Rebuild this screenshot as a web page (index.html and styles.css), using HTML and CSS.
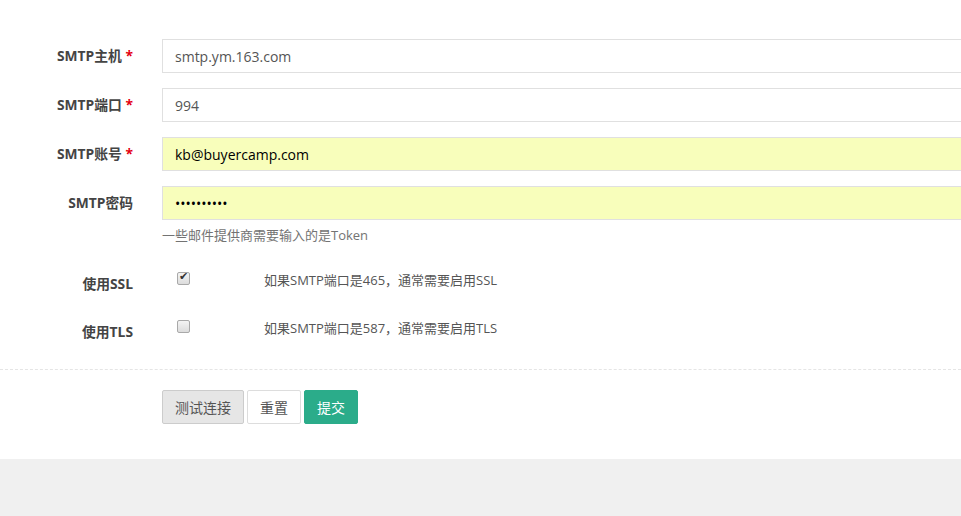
FILE: index.html
```html
<!DOCTYPE html>
<html lang="zh-CN">
<head>
  <meta charset="UTF-8">
  <title>邮件设置</title>
  <link rel="stylesheet" href="styles.css">
</head>
<body>
  <div class="panel">
    <form class="form">
      <div class="row">
        <label class="label">SMTP主机 <span class="req">*</span></label>
        <div class="field"><input class="input" type="text" value="smtp.ym.163.com"></div>
      </div>
      <div class="row">
        <label class="label">SMTP端口 <span class="req">*</span></label>
        <div class="field"><input class="input" type="text" value="994"></div>
      </div>
      <div class="row">
        <label class="label">SMTP账号 <span class="req">*</span></label>
        <div class="field"><input class="input filled" type="text" value="kb@buyercamp.com"></div>
      </div>
      <div class="row row-help">
        <label class="label">SMTP密码</label>
        <div class="field">
          <input class="input filled" type="password" value="1234567890">
          <p class="help">一些邮件提供商需要输入的是Token</p>
        </div>
      </div>
      <div class="row row-check">
        <label class="label">使用SSL</label>
        <div class="field check-field">
          <div class="check-box"><input class="check" type="checkbox" checked></div>
          <span class="check-note">如果SMTP端口是465，通常需要启用SSL</span>
        </div>
      </div>
      <div class="row row-check">
        <label class="label">使用TLS</label>
        <div class="field check-field">
          <div class="check-box"><input class="check" type="checkbox"></div>
          <span class="check-note">如果SMTP端口是587，通常需要启用TLS</span>
        </div>
      </div>

      <div class="actions">
        <button type="button" class="btn btn-test">测试连接</button>
        <button type="reset" class="btn btn-reset">重置</button>
        <button type="button" class="btn btn-submit">提交</button>
      </div>
    </form>
  </div>
  <div class="page-bottom"></div>
</body>
</html>
```

FILE: styles.css
```css
html, body {
  margin: 0;
  padding: 0;
}
body {
  font-family: "Open Sans", "Noto Sans CJK SC", sans-serif;
  font-size: 13px;
  color: #555555;
  background-color: #f0f0f0;
  overflow: hidden;
}
.panel {
  background-color: #ffffff;
  padding-top: 39px;
  padding-bottom: 35px;
}
.row {
  display: flex;
  margin-bottom: 15px;
}
.label {
  width: 133px;
  padding-right: 14px;
  padding-top: 7px;
  text-align: right;
  font-size: 13.8px;
  font-weight: bold;
  color: #444444;
  line-height: 20px;
  flex-shrink: 0;
}
.label .req {
  color: #e4000f;
}
.field {
  padding-left: 15px;
  width: 820px;
  flex-shrink: 0;
}
.input {
  display: block;
  box-sizing: border-box;
  width: 100%;
  height: 34px;
  padding: 6px 12px;
  border: 1px solid #e0e0e0;
  background-color: #ffffff;
  font-family: "Open Sans", "Noto Sans CJK SC", sans-serif;
  font-size: 14px;
  color: #555555;
  outline: none;
}
.input.filled {
  background-color: #f8febb;
  color: #000000;
}
.help {
  margin: 5px 0 0;
  color: #737373;
  font-size: 13px;
  line-height: 20px;
}
.row-help {
  margin-bottom: 18px;
}
.row-check {
  margin-bottom: 8px;
  height: 40px;
}
.row-check .label {
  padding-top: 11px;
}
.check-field {
  display: flex;
}
.check-box {
  width: 87px;
  padding-left: 15px;
  padding-top: 8px;
}
.check {
  appearance: none;
  margin: 0;
  width: 13px;
  height: 13px;
  border: 1px solid #a9a9a9;
  border-radius: 2px;
  background: linear-gradient(#f4f4f4, #dcdcdc);
  position: relative;
  box-sizing: border-box;
}
.check:checked::after {
  content: "\2714";
  position: absolute;
  left: 1px;
  top: -3px;
  font-size: 11px;
  color: #333333;
  font-family: "DejaVu Sans", sans-serif;
}
.check-note {
  padding-top: 7px;
  line-height: 20px;
  color: #555555;
}
.actions {
  border-top: 1px dashed #e5e5e5;
  margin-top: 18px;
  padding-top: 20px;
  padding-left: 162px;
  display: flex;
  gap: 3px;
}
.btn {
  height: 34px;
  padding: 0 12px;
  border: 1px solid #dddddd;
  border-radius: 2px;
  background-color: #ffffff;
  color: #555555;
  font-family: "Open Sans", "Noto Sans CJK SC", sans-serif;
  font-size: 14px;
  cursor: pointer;
}
.btn-test {
  background-color: #e6e6e6;
  border-color: #cccccc;
}
.btn-submit {
  background-color: #2bac8a;
  border-color: #2bac8a;
  color: #ffffff;
}
.page-bottom {
  height: 60px;
}
```
